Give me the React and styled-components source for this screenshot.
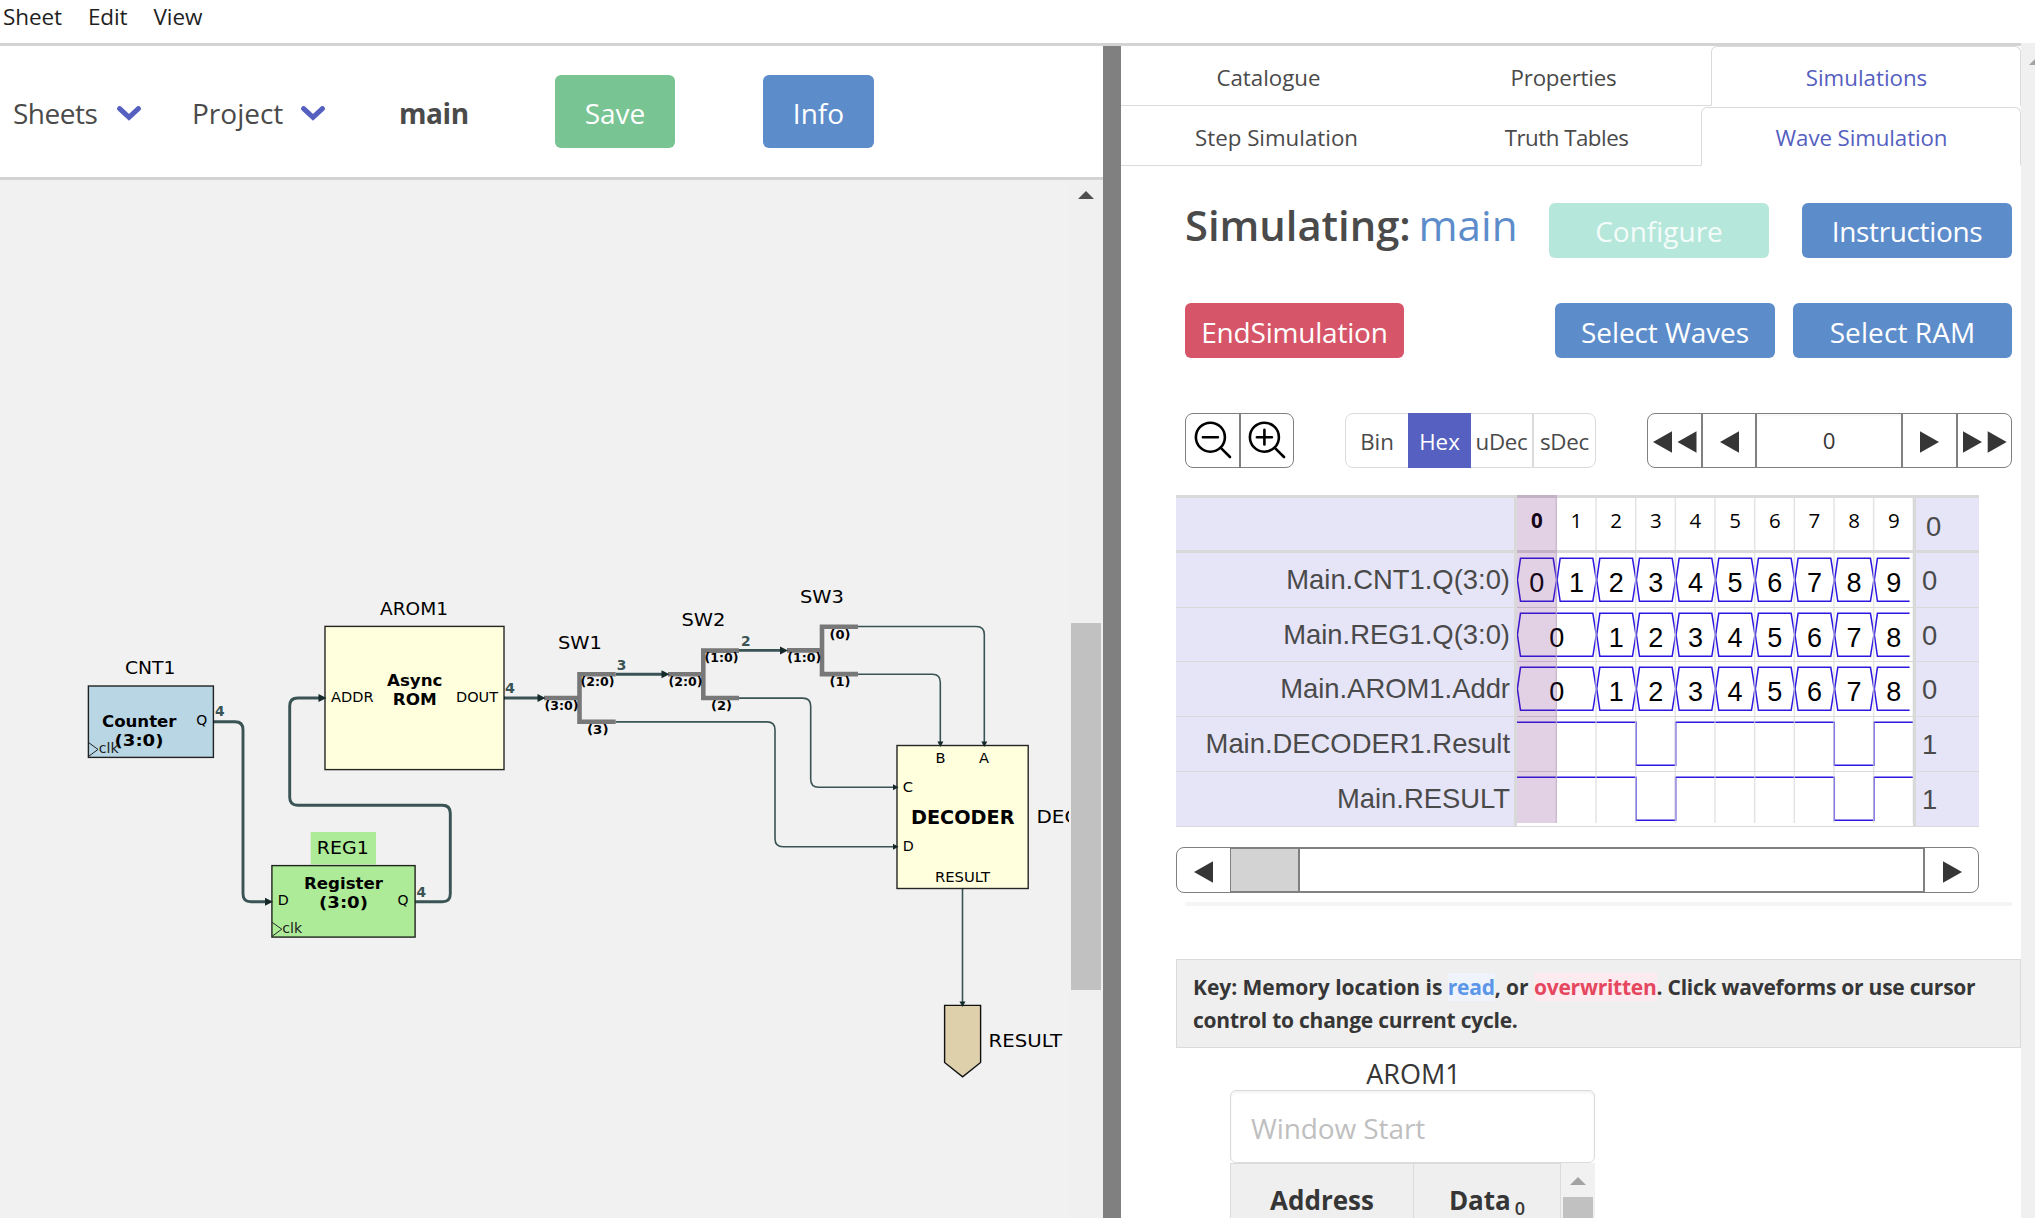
import React from 'react';
import styled, { createGlobalStyle, css } from 'styled-components';

const UI = '"Open Sans", "Noto Sans", sans-serif';
const ARIAL = '"Liberation Sans", Arial, sans-serif';
const VERDANA = '"DejaVu Sans", Verdana, sans-serif';

const GlobalStyle = createGlobalStyle`
  * { box-sizing: border-box; }
  html, body { margin: 0; height: 1218px; overflow: hidden; background: #fff; }
  body { font-family: ${UI}; color: #4a4a4a; }
`;

/* ---------- page frame ---------- */

const Page = styled.div`
  display: flex;
  flex-direction: column;
  width: 2035px;
  height: 1218px;
  overflow: hidden;
`;

const MenuBar = styled.nav`
  display: flex;
  gap: 26px;
  height: 43px;
  flex: none;
  padding-left: 3px;
  font-size: 22.5px;
  line-height: 33px;
  letter-spacing: -0.1px;
  color: #1f1f1f;
`;

const Main = styled.div`
  display: flex;
  flex: 1;
  min-height: 0;
`;

const Content = styled.div`
  display: flex;
  width: 2021px;
  border-top: 3px solid #d3d3d3;
  overflow: hidden;
`;

const PageScroll = styled.div`
  width: 14px;
  background: #f0f0f0;
  padding-top: 16px;
  padding-left: 8px;
  line-height: 0;
`;

const Workspace = styled.section`
  display: flex;
  flex-direction: column;
  width: 1103px;
`;

const Divider = styled.div`
  width: 18px;
  background: #808080;
`;

/* ---------- toolbar ---------- */

const Toolbar = styled.header`
  display: grid;
  grid-template-columns: 179px 206px 157px 208px auto;
  align-items: center;
  justify-items: start;
  height: 134px;
  padding: 0 0 0 13px;
  border-bottom: 3px solid #d3d3d3;
  font-size: 28px;
  line-height: 40px;
`;

const Dropdown = styled.div`
  display: flex;
  align-items: center;
  padding-top: 3px;
`;

const DropdownLabel = styled.span`
  width: ${(p) => p.$width}px;
  letter-spacing: ${(p) => p.$track || 0}px;
`;

const SheetName = styled.strong`
  padding: 3px 0 0 1px;
  font-weight: 700;
  letter-spacing: -0.4px;
`;

const Button = styled.button`
  width: ${(p) => p.$width}px;
  height: ${(p) => p.$height || 55}px;
  margin: 0 0 0 ${(p) => p.$gap || 0}px;
  padding: ${(p) => p.$drop ?? 3}px 0 0;
  border: 0;
  border-radius: 6px;
  background: ${(p) => p.$color};
  color: ${(p) => p.$text || '#fff'};
  font-family: ${UI};
  font-size: 28px;
  letter-spacing: ${(p) => p.$track || 0}px;
`;

/* ---------- schematic ---------- */

const CanvasArea = styled.div`
  display: flex;
  flex: 1;
  min-height: 0;
  background: #f1f1f1;
`;

const Sheet = styled.svg`
  display: block;
  width: 1069px;
  height: 1038px;
  font-family: ${VERDANA};
`;

const CanvasScroll = styled.div`
  width: 34px;
  padding: 11px 2px 0;
  background: #f0f0f0;
  line-height: 0;

  svg { display: block; margin-left: 7px; }
`;

const CanvasThumb = styled.div`
  height: 367px;
  margin-top: 424px;
  background: #c1c1c1;
`;

/* ---------- right panel ---------- */

const Panel = styled.aside`
  display: flex;
  flex-direction: column;
  width: 900px;
`;

const Tabs = styled.div`
  display: flex;
  flex: none;
  height: ${(p) => p.$height}px;
  margin-bottom: ${(p) => p.$after || 0}px;
  font-size: 22.3px;
  line-height: 32px;
`;

const Tab = styled.div`
  display: flex;
  align-items: center;
  justify-content: center;
  width: ${(p) => p.$width}px;
  padding: ${(p) => p.$drop || 3}px 0 0 1px;
  letter-spacing: ${(p) => p.$track || 0}px;
  border-bottom: 1px solid #dbdbdb;
  ${(p) => p.$active && css`
    color: #5560c0;
    padding-top: ${(p.$drop || 3) - 1}px;
    border: 1px solid #dbdbdb;
    border-bottom-color: transparent;
    border-radius: 6px 6px 0 0;
  `}
`;

const Body = styled.div`
  display: flex;
  flex-direction: column;
  padding: 0 9px 0 64px;
`;

const Row = styled.div`
  display: flex;
  align-items: center;
  height: 55px;
  margin-top: ${(p) => p.$before}px;
`;

const Title = styled.h1`
  width: 364px;
  margin: 0;
  padding: 0 0 11px;
  font-size: 41.7px;
  line-height: 60px;
  font-weight: 600;
  white-space: nowrap;
`;

const TitleSheet = styled.span`
  margin-left: -3px;
  font-weight: 500;
  font-size: 42.2px;
  color: #5d8ccb;
`;

const Group = styled.div`
  display: flex;
  width: ${(p) => p.$width}px;
  height: ${(p) => p.$height || 55}px;
  margin-left: ${(p) => p.$gap || 0}px;
  border: 1px solid ${(p) => p.$line};
  border-radius: 8px;
  font-size: 22.3px;
`;

const Cell = styled.div`
  display: flex;
  align-items: center;
  justify-content: center;
  width: ${(p) => p.$width}px;
  padding-top: ${(p) => p.$drop || 0}px;
  padding-bottom: ${(p) => p.$lift || 0}px;
  letter-spacing: ${(p) => p.$track || 0}px;
  border-left: ${(p) => (p.$rule ? `2px solid ${p.$rule}` : '0')};
  ${(p) => p.$active && css`
    margin: -1px 0;
    background: #5560c0;
    color: #fff;
  `}
  ${(p) => p.$strong && css`
    color: #363636;
    box-shadow: inset 0 2px 2px rgba(10, 10, 10, 0.04);
  `}
`;

/* ---------- waveform table ---------- */

const WaveTable = styled.div`
  display: grid;
  grid-template-columns: 341px 396px 66px;
  width: 803px;
  height: 332px;
  margin: 27px 0 0 -9px;
  font-family: ${ARIAL};
  font-size: 27.4px;
`;

const Column = styled.div`
  display: grid;
  grid-template-rows: 55px 55px 54px 55px 55px 55px;
  border-top: 3px solid #d9d9d9;
  background: #e6e5f7;
  ${(p) => (p.$side === 'left'
    ? css`border-right: 3px solid #d9d9d9; text-align: right;`
    : css`border-left: 3px solid #d9d9d9; text-align: left;`)}
`;

const WaveCell = styled.div`
  padding: ${(p) => p.$drop || 0}px 4px 0 6px;
  line-height: 53px;
  white-space: nowrap;
  border-bottom: ${(p) => (p.$head ? 3 : 1)}px solid #d9d9d9;
  ${(p) => p.$head && css`padding-left: 10px;`}
`;

const Waves = styled.svg`
  display: block;
  width: 396px;
  height: 332px;
`;

const ScrollBar = styled.div`
  display: flex;
  width: 803px;
  height: 46px;
  margin: 20px 0 0 -9px;
  border: 1px solid #808080;
  border-radius: 8px;
`;

const ScrollButton = styled.div`
  display: flex;
  align-items: center;
  justify-content: center;
  width: 53px;
  padding: ${(p) => (p.$end ? '3px 0 0 1px' : '3px 1px 0 0')};
`;

const ScrollTrack = styled.div`
  flex: 1;
  border: solid #808080;
  border-width: 1px 2px 1px 1px;
`;

const ScrollThumb = styled.div`
  width: 69px;
  height: 100%;
  background: #d3d3d3;
  border-right: 2px solid #808080;
`;

const Rule = styled.div`
  height: 4px;
  margin-top: 9px;
  background: #f5f5f5;
`;

/* ---------- memory viewer ---------- */

const KeyBox = styled.div`
  height: 89px;
  margin: 53px -9px 0;
  padding: 11px 20px 0 16px;
  border: 1px solid #dbdbdb;
  background: #efefef;
  color: #363636;
  font-size: 21px;
  font-weight: 700;
  line-height: 33px;
  letter-spacing: -0.03px;
`;

const Mark = styled.span`
  color: ${(p) => p.$color};
  background: ${(p) => p.$bg};
  letter-spacing: -0.25px;
`;

const KeyHint = styled.span`
  letter-spacing: -0.24px;
`;

const Memory = styled.div`
  width: 365px;
  margin-left: 45px;
  color: #363636;
`;

const MemoryName = styled.div`
  height: 42px;
  padding: 10px 0 0 2px;
  font-size: 27px;
  line-height: 32px;
  text-align: center;
`;

const AddressInput = styled.input`
  display: block;
  width: 365px;
  height: 73px;
  padding: 2px 20px 0;
  border: 1px solid #dbdbdb;
  border-radius: 6px;
  box-shadow: inset 0 2px 3px rgba(10, 10, 10, 0.05);
  font-family: ${UI};
  font-size: 28px;
  letter-spacing: -0.1px;
  &::placeholder { color: #bfbfbf; opacity: 1; }
`;

const MemoryHead = styled.div`
  display: grid;
  grid-template-columns: 184px 147px 34px;
  height: 55px;
  background: #efefef;
  font-size: 26px;
  font-weight: 700;
  line-height: 32px;
`;

const HeadCell = styled.div`
  padding: 20px 0 0;
  text-align: center;
  border: solid #dbdbdb;
  border-width: 1px 1px 0 ${(p) => (p.$first ? 1 : 0)}px;

  sub { margin-left: 4px; font-size: 18px; font-weight: 600; line-height: 0; vertical-align: -5px; }
`;

const MemoryScroll = styled.div`
  padding: 14px 2px 0;
  background: #f1f1f1;
  svg { display: block; margin: 0 auto; }
`;

const MemoryThumb = styled.div`
  height: 21px;
  margin-top: 12px;
  background: #c1c1c1;
`;

/* ---------- small drawings ---------- */

const Triangle = ({ dir }) => (
  <svg width="19" height="22" viewBox="0 0 19 22">
    <path d={dir === 'left' ? 'M0 11L19 0.3V21.7Z' : 'M19 11L0 0.3V21.7Z'} fill="#363636" />
  </svg>
);

const DoubleTriangle = ({ dir }) => (
  <svg width="44" height="22" viewBox="0 0 44 22">
    <path
      d={dir === 'left' ? 'M0 11L19 0.3V21.7ZM24.5 11L43.5 0.3V21.7Z' : 'M19 11L0 0.3V21.7ZM43.7 11L24.7 0.3V21.7Z'}
      fill="#363636"
    />
  </svg>
);

const Chevron = () => (
  <svg width="24" height="15" viewBox="0 0 24 15">
    <path d="M2.6 2.6L12 11.4L21.4 2.6" fill="none" stroke="#5560c0" strokeWidth="5" strokeLinecap="round" />
  </svg>
);

const Magnifier = ({ plus }) => (
  <svg width="38" height="38" viewBox="0 0 38 38" fill="none" stroke="#000" strokeWidth="2.6" strokeLinecap="round">
    <circle cx="16.4" cy="16.2" r="14.5" />
    <path d="M8.9 16.2H23.9M26.8 26.8L36 36" />
    {plus && <path d="M16.4 8.9V23.5" />}
  </svg>
);

/* ---------- schematic parts ---------- */

const T = ({ x, y, w, size = 14, bold, fill = '#000', children }) => (
  <text
    x={x}
    y={y}
    fontSize={size}
    fontWeight={bold ? 700 : 400}
    fill={fill}
    textLength={w}
    lengthAdjust="spacingAndGlyphs"
  >
    {children}
  </text>
);

const Box = ({ x, y, w, h, fill }) => (
  <rect x={x} y={y} width={w} height={h} fill={fill} stroke="#000" strokeOpacity="0.85" strokeWidth="1.4" />
);

const Wire = ({ d, bus }) => <path d={d} fill="none" stroke="#3a5354" strokeWidth={bus ? 2.9 : 1.6} />;

const ArrowRight = ({ x, y, small }) => {
  const h = small ? 3 : 4;
  const l = small ? 5.5 : 8;
  return <path d={`M${x} ${y}L${x - l} ${y - h}V${y + h}Z`} fill="#16292a" />;
};

const ArrowDown = ({ x, y }) => <path d={`M${x} ${y}L${x - 3} ${y - 5.5}H${x + 3}Z`} fill="#16292a" />;

const Splitter = ({ x0, x, x1, y }) => (
  <path
    d={`M${x0} ${y}H${x}M${x1} ${y - 23.7}H${x}V${y + 23.7}H${x1}`}
    fill="none"
    stroke="#787878"
    strokeWidth="4.6"
  />
);

const Schematic = () => (
  <Sheet viewBox="0 180 1069 1038">
    <Wire bus d="M213.3 721.7H235Q243 721.7 243 729.7V893.7Q243 901.7 251 901.7H267" />
    <Wire bus d="M415.3 901.7H442.3Q450.3 901.7 450.3 893.7V813.3Q450.3 805.3 442.3 805.3H297.7Q289.7 805.3 289.7 797.3V706Q289.7 698 297.7 698H320" />
    <Wire bus d="M504 698H540" />
    <Wire bus d="M615.7 674.3H663" />
    <Wire bus d="M739 650.4H782" />
    <Wire d="M858 626.5H976.3Q984.3 626.5 984.3 634.5V742" />
    <Wire d="M858 674.3H932.3Q940.3 674.3 940.3 682.3V742" />
    <Wire d="M739 698.1H802.7Q810.7 698.1 810.7 706.1V779.3Q810.7 787.3 818.7 787.3H894" />
    <Wire d="M615.7 721.9H767Q775 721.9 775 729.9V838.7Q775 846.7 783 846.7H894" />
    <Wire d="M962.5 888.5V1002" />

    <Splitter x0={544} x={579.5} x1={615.7} y={698} />
    <Splitter x0={668} x={703.3} x1={739} y={674.3} />
    <Splitter x0={787} x={822} x1={858} y={650.4} />

    <Box x={88.4} y={686} w={125} h={71.4} fill="#b9d6e4" />
    <T x={125} y={673.6} w={50.5} size={18.5}>CNT1</T>
    <T x={102} y={727} w={74.5} size={16.2} bold>Counter</T>
    <T x={114.5} y={746} w={49} size={16.2} bold>(3:0)</T>
    <T x={196.3} y={725.3} w={11} size={13.6}>Q</T>
    <T x={98.7} y={752.5} w={20} size={14} fill="#222">clk</T>
    <path d="M88.6 742.6L98 749.4L88.6 756.4" fill="none" stroke="#222" strokeWidth="1" />
    <T x={215} y={716.4} w={9.6} size={13.6} bold fill="#3a5354">4</T>

    <rect x={310.7} y={832} width={65.3} height={32.5} fill="#adeb98" />
    <Box x={271.9} y={865.6} w={143.2} h={71.5} fill="#adeb98" />
    <T x={316.8} y={853.6} w={52} size={18.5}>REG1</T>
    <T x={304} y={888.8} w={79} size={16.2} bold>Register</T>
    <T x={319} y={907.8} w={49} size={16.2} bold>(3:0)</T>
    <T x={277.8} y={905.3} w={11} size={13.6}>D</T>
    <T x={397.5} y={905.3} w={11} size={13.6}>Q</T>
    <T x={282.3} y={932.8} w={20} size={14} fill="#222">clk</T>
    <path d="M272.2 922.4L281.8 929.2L272.2 936.2" fill="none" stroke="#222" strokeWidth="1" />
    <T x={416.5} y={896.6} w={9.6} size={13.6} bold fill="#3a5354">4</T>

    <Box x={325} y={626.4} w={179} h={143.2} fill="#ffffde" />
    <T x={380} y={614.6} w={68} size={18.5}>AROM1</T>
    <T x={387} y={685.8} w={55.5} size={16.2} bold>Async</T>
    <T x={392.7} y={704.8} w={44} size={16.2} bold>ROM</T>
    <T x={331} y={702} w={42.5} size={14}>ADDR</T>
    <T x={456} y={702} w={42} size={14}>DOUT</T>
    <T x={505} y={693.3} w={10} size={13.6} bold fill="#3a5354">4</T>

    <T x={558} y={649.4} w={44} size={18.5}>SW1</T>
    <T x={544.5} y={710} w={34} size={13} bold>(3:0)</T>
    <T x={580.5} y={686.3} w={34} size={13} bold>(2:0)</T>
    <T x={587} y={734.2} w={21.5} size={13} bold>(3)</T>
    <T x={616.7} y={669.8} w={9.6} size={13.6} bold fill="#3a5354">3</T>

    <T x={681.5} y={625.8} w={44} size={18.5}>SW2</T>
    <T x={668.5} y={686.3} w={34} size={13} bold>(2:0)</T>
    <T x={704.5} y={662} w={34} size={13} bold>(1:0)</T>
    <T x={711} y={710} w={21} size={13} bold>(2)</T>
    <T x={741} y={646} w={9.6} size={13.6} bold fill="#3a5354">2</T>

    <T x={800} y={602.6} w={44} size={18.5}>SW3</T>
    <T x={787.3} y={662} w={34} size={13} bold>(1:0)</T>
    <T x={829.5} y={639} w={21} size={13} bold>(0)</T>
    <T x={829.5} y={686.3} w={21} size={13} bold>(1)</T>

    <Box x={897} y={745.5} w={131.2} h={143} fill="#ffffde" />
    <T x={935.5} y={763.2} w={10} size={14}>B</T>
    <T x={979} y={763.2} w={10} size={14}>A</T>
    <T x={902.7} y={792.2} w={10.3} size={14}>C</T>
    <T x={902.7} y={851.3} w={11} size={14}>D</T>
    <T x={911} y={823.5} w={103.5} size={18.6} bold>DECODER</T>
    <T x={935} y={881.8} w={55} size={14}>RESULT</T>
    <T x={1036.5} y={822.7} w={112} size={18.5}>DECODER1</T>

    <path d="M944.6 1005.4H980.6V1062.5L962.6 1076.8L944.6 1062.5Z" fill="#dfd0ac" stroke="#111" strokeWidth="1.4" />
    <T x={988.5} y={1046.6} w={73.5} size={18.5}>RESULT</T>

    <ArrowRight x={273} y={901.7} />
    <ArrowRight x={326.5} y={698} />
    <ArrowRight x={545.5} y={698} />
    <ArrowRight x={669.5} y={674.3} />
    <ArrowRight x={788} y={650.4} />
    <ArrowRight small x={898.5} y={787.3} />
    <ArrowRight small x={898.5} y={846.7} />
    <ArrowDown x={940.4} y={747} />
    <ArrowDown x={984.3} y={747} />
    <ArrowDown x={962.5} y={1007} />
  </Sheet>
);

/* ---------- waveforms ---------- */

const CYCLE = 39.66;
const INK = '#2c17e0';

const busPath = (starts, top) => {
  const bottom = top + 43;
  const mid = top + 21.5;
  return starts
    .map((s, i) => {
      const x = s * CYCLE;
      const last = i === starts.length - 1;
      const e = last ? 10 * CYCLE : starts[i + 1] * CYCLE;
      return last
        ? `M${e - 4} ${top}H${x + 3.5}L${x + 0.4} ${mid}L${x + 3.5} ${bottom}H${e - 4}`
        : `M${x + 0.4} ${mid}L${x + 3.5} ${top}H${e - 3.5}L${e} ${mid}L${e - 3.5} ${bottom}H${x + 3.5}Z`;
    })
    .join('');
};

const bitPath = (bits, top) => {
  const level = (b) => top + (b === '1' ? 0 : 43);
  return `M0 ${level(bits[0])}${bits
    .split('')
    .map((b, i) => `V${level(b)}H${(i + 1) * CYCLE}`)
    .join('')}`;
};

const BUS_A = [0, 1, 2, 3, 4, 5, 6, 7, 8, 9];
const BUS_B = [0, 2, 3, 4, 5, 6, 7, 8, 9];
const BUSES = [
  { starts: BUS_A, top: 63.3, base: 97 },
  { starts: BUS_B, top: 118.3, base: 152 },
  { starts: BUS_B, top: 172.3, base: 206.3 },
];

const WaveForms = () => (
  <Waves viewBox="0 0 396 332">
    <path d="M0 1.5H396M0 56.5H396" stroke="#d9d9d9" strokeWidth="3" />
    <path d="M0 112.5H396M0 166.5H396M0 221.5H396M0 276.5H396M0 331.5H396" stroke="#d9d9d9" />
    {BUS_A.map((n) => (
      <text
        key={n}
        x={(n + 0.5) * CYCLE}
        y="33.4"
        textAnchor="middle"
        fontFamily={UI}
        fontSize="20.5"
        fontWeight={n ? 400 : 700}
        fill="#000"
      >
        {n}
      </text>
    ))}
    <g fill="none" stroke={INK} strokeWidth="1.5">
      {BUSES.map((b) => <path key={b.top} d={busPath(b.starts, b.top)} />)}
      <path d={bitPath('1110111101', 227.3)} />
      <path d={bitPath('1110111101', 282.3)} />
    </g>
    <path
      d={BUS_A.map((n) => `M${(n + 1) * CYCLE - 0.3} 3V328`).join('')}
      stroke="#d9d9d9"
      strokeOpacity="0.7"
      strokeWidth="1.5"
    />
    {BUSES.map((b) => b.starts.map((s, i) => (
      <text
        key={`${b.top}-${s}`}
        x={((s + (b.starts[i + 1] ?? 10)) / 2) * CYCLE}
        y={b.base}
        textAnchor="middle"
        fontFamily={ARIAL}
        fontSize="27"
        fill="#000"
      >
        {i}
      </text>
    )))}
    <rect x="0" y="0" width="40" height="328" fill="rgb(110,25,120)" fillOpacity="0.2" />
  </Waves>
);

const SIGNALS = [
  ['Main.CNT1.Q(3:0)', '0'],
  ['Main.REG1.Q(3:0)', '0'],
  ['Main.AROM1.Addr', '0'],
  ['Main.DECODER1.Result', '1'],
  ['Main.RESULT', '1'],
];

export default function App() {
  return (
    <Page>
      <GlobalStyle />
      <MenuBar>
        <span>Sheet</span>
        <span>Edit</span>
        <span>View</span>
      </MenuBar>
      <Main>
        <Content>
          <Workspace>
            <Toolbar>
              <Dropdown>
                <DropdownLabel $width={104} $track={-0.5}>Sheets</DropdownLabel>
                <Chevron />
              </Dropdown>
              <Dropdown>
                <DropdownLabel $width={109}>Project</DropdownLabel>
                <Chevron />
              </Dropdown>
              <SheetName>main</SheetName>
              <Button $width={120} $height={73} $color="#78c493">Save</Button>
              <Button $width={111} $height={73} $color="#5d8ccb">Info</Button>
            </Toolbar>
            <CanvasArea>
              <Schematic />
              <CanvasScroll>
                <svg width="16" height="8"><path d="M0 8L8 0L16 8Z" fill="#505050" /></svg>
                <CanvasThumb />
              </CanvasScroll>
            </CanvasArea>
          </Workspace>
          <Divider />
          <Panel>
            <Tabs $height={60} $after={1}>
              <Tab $width={294} $drop={5}>Catalogue</Tab>
              <Tab $width={296} $drop={5} $track={-0.2}>Properties</Tab>
              <Tab $width={310} $drop={5} $active>Simulations</Tab>
            </Tabs>
            <Tabs $height={59}>
              <Tab $width={310}>Step Simulation</Tab>
              <Tab $width={270} $track={-0.5}>Truth Tables</Tab>
              <Tab $width={320} $track={-0.1} $active>Wave Simulation</Tab>
            </Tabs>
            <Body>
              <Row $before={37}>
                <Title>Simulating: <TitleSheet>main</TitleSheet></Title>
                <Button $width={220} $drop={1} $color="#b6e7db" $text="#f4fcfa">Configure</Button>
                <Button $width={210} $drop={1} $gap={33} $color="#5d8ccb" $track={-0.35}>Instructions</Button>
              </Row>
              <Row $before={45}>
                <Button $width={219} $color="#d65568" $track={-0.2}>EndSimulation</Button>
                <Button $width={220} $gap={151} $color="#5d8ccb" $track={-0.1}>Select Waves</Button>
                <Button $width={219} $gap={18} $color="#5d8ccb" $track={0.1}>Select RAM</Button>
              </Row>
              <Row $before={55}>
                <Group $width={109} $line="#808080">
                  <Cell $width={53} $lift={1}><Magnifier /></Cell>
                  <Cell $width={54} $lift={1} $rule="#808080"><Magnifier plus /></Cell>
                </Group>
                <Group $width={251} $gap={51} $line="#dbdbdb">
                  <Cell $width={62} $drop={1}>Bin</Cell>
                  <Cell $width={63} $drop={1} $active>Hex</Cell>
                  <Cell $width={61} $drop={1} $track={-0.3}>uDec</Cell>
                  <Cell $width={63} $drop={1} $track={-0.2} $rule="#dbdbdb">sDec</Cell>
                </Group>
                <Group $width={365} $gap={51} $line="#808080">
                  <Cell $width={53} $drop={3}><DoubleTriangle dir="left" /></Cell>
                  <Cell $width={54} $drop={3} $rule="#808080"><Triangle dir="left" /></Cell>
                  <Cell $width={146} $drop={0} $rule="#808080" $strong>0</Cell>
                  <Cell $width={55} $drop={3} $rule="#808080"><Triangle dir="right" /></Cell>
                  <Cell $width={55} $drop={3} $rule="#808080"><DoubleTriangle dir="right" /></Cell>
                </Group>
              </Row>
              <WaveTable>
                <Column $side="left">
                  <WaveCell $head />
                  {SIGNALS.map(([name]) => <WaveCell key={name}>{name}</WaveCell>)}
                </Column>
                <WaveForms />
                <Column $side="right">
                  <WaveCell $head $drop={2}>0</WaveCell>
                  {SIGNALS.map(([name, value]) => <WaveCell key={name} $drop={1}>{value}</WaveCell>)}
                </Column>
              </WaveTable>
              <ScrollBar>
                <ScrollButton><Triangle dir="left" /></ScrollButton>
                <ScrollTrack><ScrollThumb /></ScrollTrack>
                <ScrollButton $end><Triangle dir="right" /></ScrollButton>
              </ScrollBar>
              <Rule />
              <KeyBox>
                Key: Memory location is <Mark $color="#5c96e8" $bg="#eef3fc">read</Mark>, or{' '}
                <Mark $color="#e5475f" $bg="#fdebef">overwritten</Mark>
                <KeyHint>. Click waveforms or use cursor control to change current cycle.</KeyHint>
              </KeyBox>
              <Memory>
                <MemoryName>AROM1</MemoryName>
                <AddressInput placeholder="Window Start" />
                <MemoryHead>
                  <HeadCell $first>Address</HeadCell>
                  <HeadCell>Data<sub>0</sub></HeadCell>
                  <MemoryScroll>
                    <svg width="16" height="8"><path d="M0 8L8 0L16 8Z" fill="#a3a3a3" /></svg>
                    <MemoryThumb />
                  </MemoryScroll>
                </MemoryHead>
              </Memory>
            </Body>
          </Panel>
        </Content>
        <PageScroll>
          <svg width="6" height="6"><path d="M0 6L5.5 0.5H6V6Z" fill="#a3a3a3" /></svg>
        </PageScroll>
      </Main>
    </Page>
  );
}
